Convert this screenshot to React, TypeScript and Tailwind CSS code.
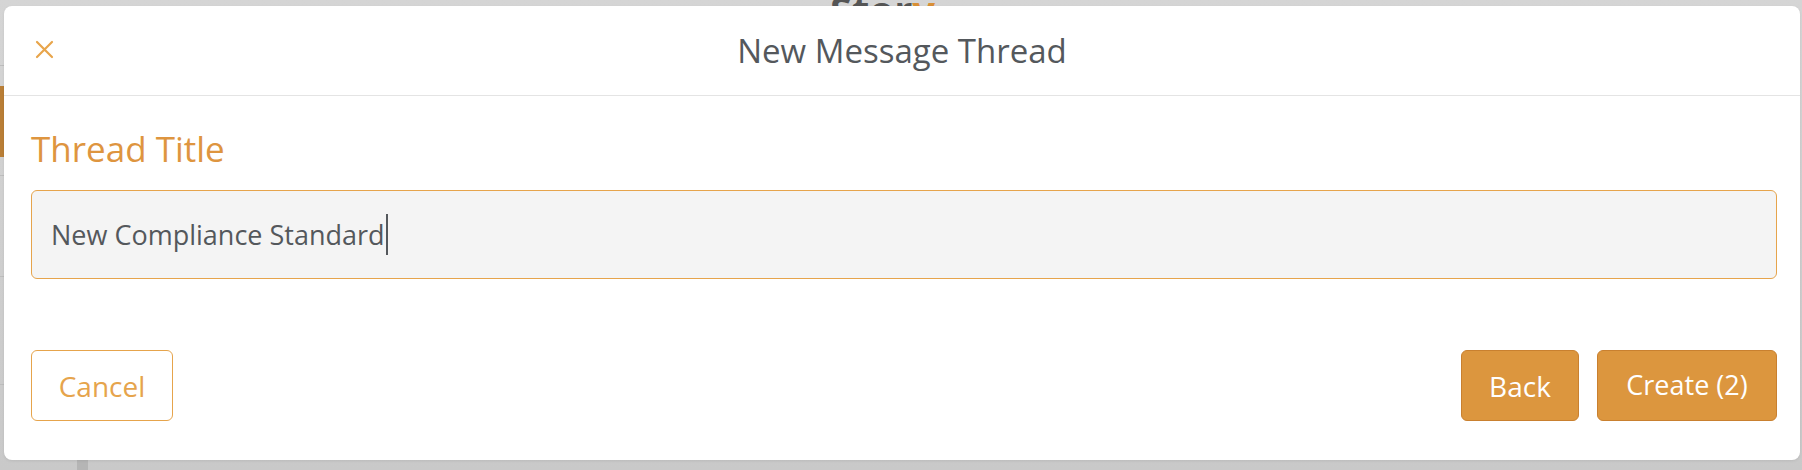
import React from 'react';

const CloseIcon: React.FC = () => (
  <svg width="19" height="19" viewBox="0 0 19 19" fill="none">
    <path d="M2 2L17 17M17 2L2 17" stroke="#e8a54b" strokeWidth="2.2" strokeLinecap="round" />
  </svg>
);

const App: React.FC = () => {
  const title = 'New Compliance Standard';

  return (
    <div
      className="relative w-[1802px] h-[470px] overflow-hidden bg-linear-to-b from-[#d5d5d5] to-[#c9c9c9]"
      style={{ fontFamily: '"Open Sans", "Liberation Sans", sans-serif' }}
    >
      {/* Page behind the overlay */}
      <div className="flex h-full">
        <div className="w-[12px] flex flex-col">
          <div className="h-[66px] border-b border-[#bdbdbd]" />
          <div className="h-[20px]" />
          <div className="h-[71px] bg-[#b97e36]" />
          <div className="h-[19px] border-b border-[#bdbdbd]" />
          <div className="h-[101px] border-b border-[#bdbdbd]" />
          <div className="h-[108px] border-b border-[#bdbdbd]" />
        </div>
        <div className="flex-1 flex flex-col">
          <div className="flex pl-[818px] -mt-[10px]">
            <span className="text-[40px] font-bold text-[#555] leading-none">
              Stor<span className="text-[#d88f36]">y</span>
            </span>
          </div>
          <div className="flex-1" />
          <div className="ml-[65px] w-[11px] h-[10px] bg-[#b5b5b5]" />
        </div>
      </div>

      {/* Modal */}
      <div className="absolute left-[4px] top-[6px] w-[1796px] h-[454px] bg-white rounded-[8px] shadow-[0_1px_3px_rgba(0,0,0,0.08)] flex flex-col">
        <div className="relative h-[90px] border-b border-[#e4e4e4] flex items-center justify-center">
          <button className="absolute left-[31px] top-[34px]">
            <CloseIcon />
          </button>
          <h2 className="text-[33px] text-[#54585c]">New Message Thread</h2>
        </div>

        <div className="pl-[27px] pr-[23px] flex flex-col">
          <label className="mt-[33px] text-[35px] leading-[40px] text-[#de953f]">Thread Title</label>
          <div className="mt-[21px] h-[89px] rounded-[6px] border border-[#e6a44c] bg-[#f4f4f4] flex items-center pl-[19px]">
            <span className="text-[27px] text-[#54585c] leading-none">{title}</span>
            <span className="ml-[1px] w-[2px] h-[41px] bg-[#54585c]" />
          </div>

          <div className="mt-[71px] flex items-center justify-between">
            <button className="w-[142px] h-[71px] rounded-[6px] border border-[#e6a44c] bg-white text-[28px] text-[#e6a44c]">
              Cancel
            </button>
            <div className="flex gap-[18px]">
              <button className="w-[118px] h-[71px] rounded-[6px] border border-[#c9802f] bg-[#dc963e] text-[28px] text-white">
                Back
              </button>
              <button className="w-[180px] h-[71px] rounded-[6px] border border-[#c9802f] bg-[#dc963e] text-[27px] text-white">
                Create (2)
              </button>
            </div>
          </div>
        </div>
      </div>
    </div>
  );
};

export default App;
